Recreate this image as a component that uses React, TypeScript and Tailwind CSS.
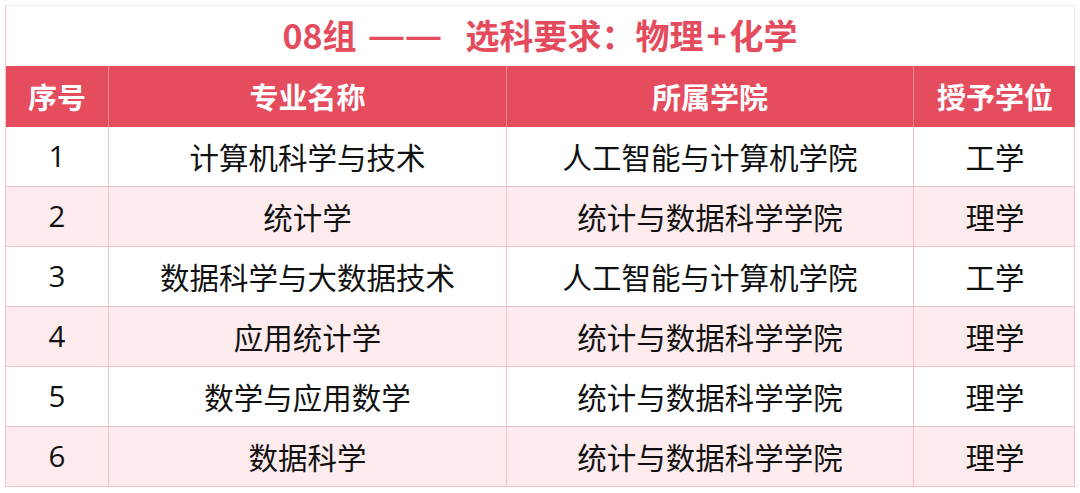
const rows = [
  { no: "1", major: "计算机科学与技术", college: "人工智能与计算机学院", degree: "工学" },
  { no: "2", major: "统计学", college: "统计与数据科学学院", degree: "理学" },
  { no: "3", major: "数据科学与大数据技术", college: "人工智能与计算机学院", degree: "工学" },
  { no: "4", major: "应用统计学", college: "统计与数据科学学院", degree: "理学" },
  { no: "5", major: "数学与应用数学", college: "统计与数据科学学院", degree: "理学" },
  { no: "6", major: "数据科学", college: "统计与数据科学学院", degree: "理学" },
];

const cols = "grid grid-cols-[103px_398px_407px_162px]";

export default function App() {
  return (
    <div className="w-[1080px] h-[493px] bg-white pt-[5px] pl-[5px] font-['Noto_Sans_CJK_SC',sans-serif]">
      <div className="w-[1070px] border-l border-[#f3c4cb]">
        {/* title */}
        <div className="h-[61px] border-t border-r border-[#ececec] flex items-center justify-center text-[34px] font-bold text-[#e44c5e] leading-none pb-[3px]">
          <span>08组</span>
          <span className="ml-[13px] mr-[22px] font-['Liberation_Sans',sans-serif] tracking-[3px] whitespace-nowrap">——</span>
          <span>选科要求：物理<span className="mx-[3px]">+</span>化学</span>
        </div>

        {/* header */}
        <div className={`${cols} h-[61px] bg-[#e54d5f] text-white text-[29px] font-bold`}>
          <div className="flex items-center justify-center border-r border-[#f08a96]">序号</div>
          <div className="flex items-center justify-center border-r border-[#f08a96]">专业名称</div>
          <div className="flex items-center justify-center border-r border-[#f08a96]">所属学院</div>
          <div className="flex items-center justify-center">授予学位</div>
        </div>

        {rows.map((r, i) => (
          <div
            key={r.no}
            className={`${cols} h-[60px] border-b border-r border-[#f5c1c8] text-[29.5px] text-[#111] ${i % 2 === 1 ? "bg-[#fdebed]" : "bg-white"}`}
          >
            <div className="flex items-center justify-center border-r border-[#f5c1c8] font-['Open_Sans',sans-serif]">{r.no}</div>
            <div className="flex items-center justify-center border-r border-[#f5c1c8]">{r.major}</div>
            <div className="flex items-center justify-center border-r border-[#f5c1c8]">{r.college}</div>
            <div className="flex items-center justify-center">{r.degree}</div>
          </div>
        ))}
      </div>
    </div>
  );
}
